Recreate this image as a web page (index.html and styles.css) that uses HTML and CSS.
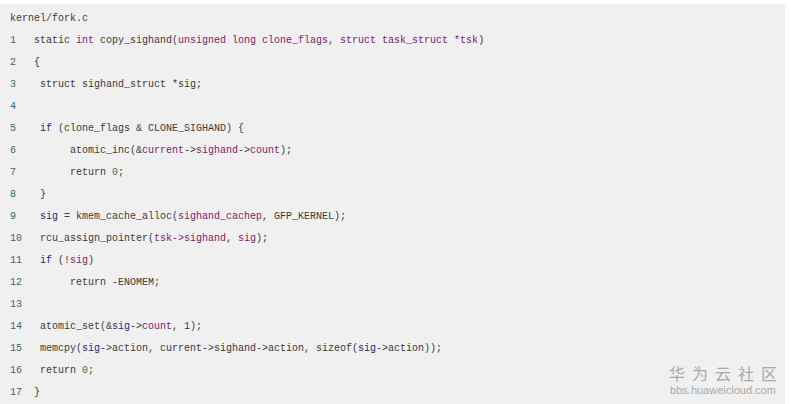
FILE: index.html
```html
<!DOCTYPE html>
<html>
<head>
<meta charset="utf-8">
<link rel="stylesheet" href="styles.css">
</head>
<body>
<div class="box">
  <div class="title">kernel/fork.c</div>
  <div class="code">
    <div class="ln"><span class="no">1</span><span class="src">static <span class="k">int</span> copy_sighand(<span class="k">unsigned long clone_flags</span>, <span class="k">struct task_struct *tsk</span>)</span></div>
    <div class="ln"><span class="no">2</span><span class="src">{</span></div>
    <div class="ln"><span class="no">3</span><span class="src"> struct sighand_struct *<span class="v">sig</span>;</span></div>
    <div class="ln"><span class="no">4</span><span class="src"></span></div>
    <div class="ln"><span class="no">5</span><span class="src"> <span class="b">if</span> (clone_flags &amp; CLONE_SIGHAND) {</span></div>
    <div class="ln"><span class="no">6</span><span class="src">      atomic_inc(&amp;<span class="k">current</span>-&gt;<span class="k">sighand</span>-&gt;<span class="k">count</span>);</span></div>
    <div class="ln"><span class="no">7</span><span class="src">      return <span class="n">0</span>;</span></div>
    <div class="ln"><span class="no">8</span><span class="src"> }</span></div>
    <div class="ln"><span class="no">9</span><span class="src"> <span class="b">sig</span> = kmem_cache_alloc(<span class="k">sighand_cachep</span>, GFP_KERNEL);</span></div>
    <div class="ln"><span class="no">10</span><span class="src"> rcu_assign_pointer(<span class="k">tsk-&gt;sighand</span>, <span class="k">sig</span>);</span></div>
    <div class="ln"><span class="no">11</span><span class="src"> <span class="b">if</span> (!<span class="k">sig</span>)</span></div>
    <div class="ln"><span class="no">12</span><span class="src">      return -ENOMEM;</span></div>
    <div class="ln"><span class="no">13</span><span class="src"></span></div>
    <div class="ln"><span class="no">14</span><span class="src"> atomic_set(&amp;<span class="b">sig</span>-&gt;<span class="k">count</span>, 1);</span></div>
    <div class="ln"><span class="no">15</span><span class="src"> memcpy(<span class="b">sig</span>-&gt;action, current-&gt;sighand-&gt;action, sizeof(<span class="b">sig</span>-&gt;action));</span></div>
    <div class="ln"><span class="no">16</span><span class="src"> return <span class="n">0</span>;</span></div>
    <div class="ln"><span class="no">17</span><span class="src">}</span></div>
  </div>
  <div class="mark">
    <div class="mark-cn">华为云社区</div>
    <div class="mark-en">bbs.huaweicloud.com</div>
  </div>
</div>
</body>
</html>
```
FILE: styles.css
```css
html, body {
  margin: 0;
  padding: 0;
  background: #ffffff;
}
.box {
  position: relative;
  margin-top: 4px;
  width: 785px;
  height: 400px;
  padding: 4px 0 0 10px;
  box-sizing: border-box;
  background: #f0f0f0;
  font-family: "Liberation Mono", "DejaVu Sans Mono", monospace;
  font-size: 10px;
  color: #3a3a3a;
}
.title, .ln {
  height: 22px;
  line-height: 22px;
  white-space: pre;
}
.ln {
  display: flex;
}
.no {
  width: 24px;
  flex: none;
  color: #2a6b7c;
}
.src {
  white-space: pre;
}
.k { color: #7b1d6f; }
.b { color: #222a80; }
.v { color: #3a3a3a; }
.n { color: #1a7a66; }
.mark {
  position: absolute;
  right: 8px;
  bottom: 8px;
  text-align: center;
  color: #a8a8a8;
  font-family: "Noto Sans CJK SC", "Liberation Sans", sans-serif;
}
.mark-cn {
  font-size: 16px;
  line-height: 18px;
  letter-spacing: 7px;
  margin-right: -7px;
  margin-bottom: 2px;
}
.mark-en {
  font-family: "Liberation Sans", Arial, sans-serif;
  font-size: 11px;
  line-height: 12px;
}
```
